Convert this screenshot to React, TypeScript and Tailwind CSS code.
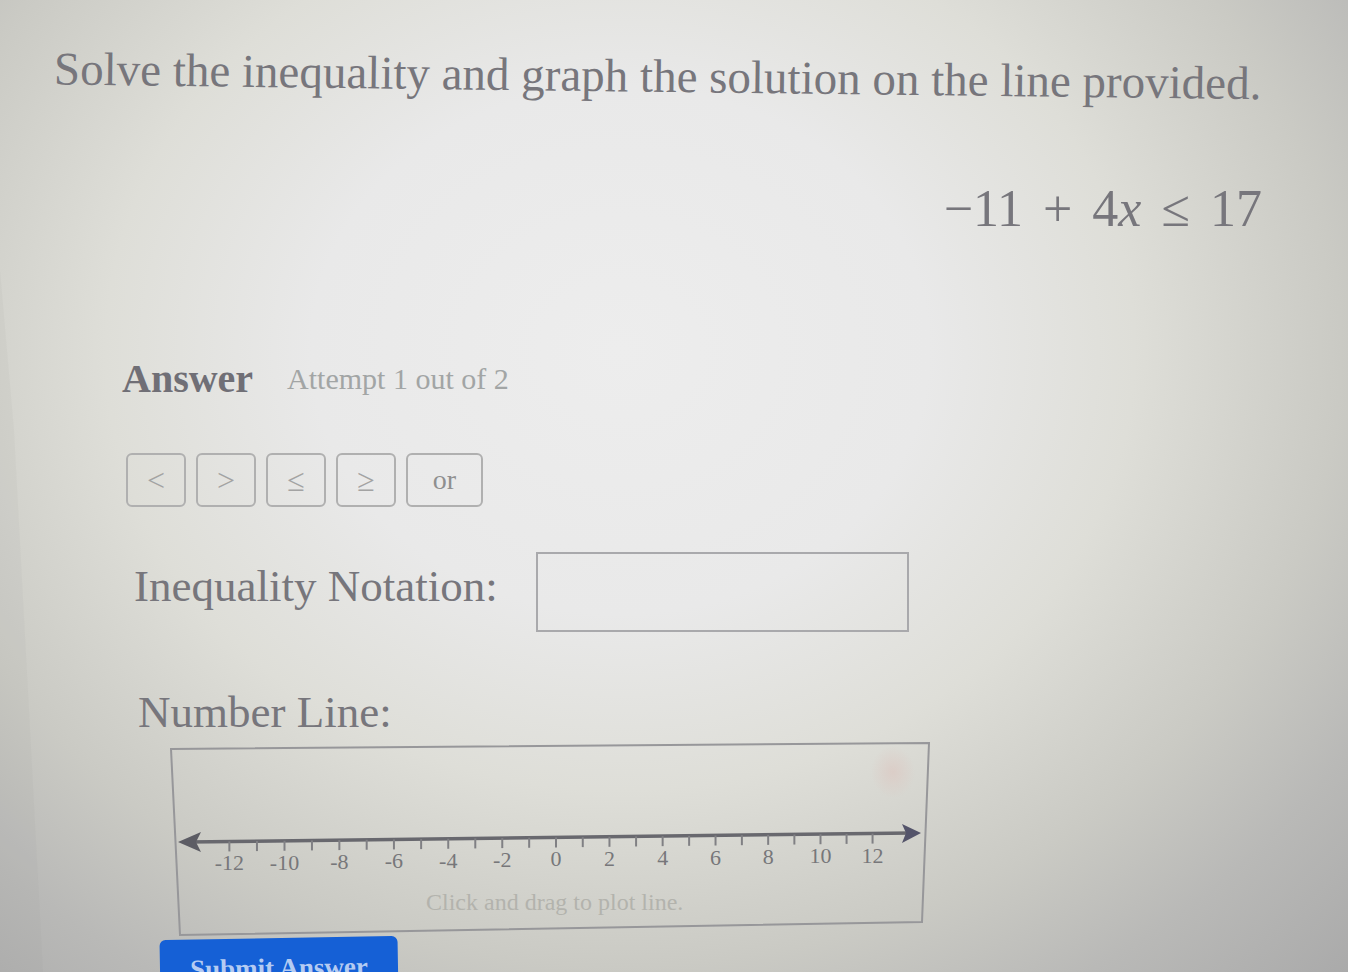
/**
 * Inequality Question
 * ===================
 *
 * Question prompt, inequality input and number line graph
 */

import { useState } from 'react';

const SYMBOLS = ['<', '>', '≤', '≥'];
const TICKS = Array.from({ length: 25 }, (_, i) => i - 12);

const tickX = (n: number) => 386 + 26.8 * n - 0.035 * n * n;
const lineY = (x: number) => 104 - ((x - 12) * 9) / 740;

interface SymbolBarProps {
  onInsert: (symbol: string) => void;
}

function SymbolBar({ onInsert }: SymbolBarProps) {
  return (
    <div className="ml-1 mt-[54px] flex gap-[10px] text-[#a3a3a3]">
      {SYMBOLS.map((symbol) => (
        <button
          key={symbol}
          type="button"
          onClick={() => onInsert(symbol)}
          className="h-[54px] w-[60px] rounded-md border-2 border-[#b0b0b0] text-[32px] leading-none"
        >
          {symbol}
        </button>
      ))}
      <button
        type="button"
        onClick={() => onInsert(' or ')}
        className="h-[54px] w-[77px] rounded-md border-2 border-[#b0b0b0] text-[28px] leading-none text-[#8f8f8f]"
      >
        or
      </button>
    </div>
  );
}

function NumberLine() {
  return (
    <svg viewBox="0 0 764 200" className="block w-full max-w-[764px]" role="group" aria-labelledby="number-line">
      <defs>
        <radialGradient id="clear">
          <stop offset="0" stopColor="#dcc8c2" stopOpacity="0.7" />
          <stop offset="1" stopColor="#dcc8c2" stopOpacity="0" />
        </radialGradient>
      </defs>
      <polygon points="1,11 759,5 752,184 10,197" fill="none" stroke="#97979a" strokeWidth="2" />
      <ellipse cx="723" cy="34" rx="22" ry="26" fill="url(#clear)" />

      {/* Axis with arrow heads */}
      <line x1="18" y1="104" x2="742" y2="95" stroke="#68686e" strokeWidth="3.5" />
      <path d="M8 104 L31 94 L26 104 L31 114 Z" fill="#5c5c64" />
      <path d="M751 95 L732 86 L736 95 L732 105 Z" fill="#54546a" />

      {TICKS.map((n) => {
        const x = tickX(n);
        const y = lineY(x);
        return (
          <g key={n}>
            <line x1={x} y1={y} x2={x} y2={y + 10} stroke="#808084" strokeWidth="2" />
            {n % 2 === 0 && (
              <text x={x} y={y + 29} textAnchor="middle" fontSize="22" fill="#77777a">
                {n}
              </text>
            )}
          </g>
        );
      })}

      <text x="256" y="172" fontSize="24" fill="#b3b3ad">
        Click and drag to plot line.
      </text>
    </svg>
  );
}

export default function App() {
  const [answer, setAnswer] = useState('');

  return (
    <main className="relative min-h-screen overflow-hidden bg-[radial-gradient(ellipse_at_46%_36%,#ededed_0%,#e9e9e9_30%,#deded8_50%,#cacac4_70%,#b9b9b7_84%,#aaaaaa_100%)] px-[54px] pt-12 font-['Liberation_Serif',serif] text-[#77767c] h-screen">
      {/* Edge of the sheet */}
      <svg
        className="pointer-events-none absolute inset-0 h-full w-full"
        viewBox="0 0 1348 972"
        preserveAspectRatio="none"
        aria-hidden="true"
      >
        <path d="M0 270 L14 430 L43 972 L0 972 Z" fill="#909090" fillOpacity="0.06" />
      </svg>

      <h1 className="origin-center rotate-[0.7deg] whitespace-nowrap text-[47px] leading-[56px]">
        Solve the inequality and graph the solution on the line provided.
      </h1>

      <div className="mr-8 mt-[73px] flex justify-end gap-5 text-[52px] leading-[64px]">
        <span>−11</span>
        <span>+</span>
        <span>
          4<i>x</i>
        </span>
        <span>≤</span>
        <span>17</span>
      </div>

      <form className="ml-[68px] mt-[118px]" onSubmit={(e) => e.preventDefault()}>
        <div className="flex items-center gap-[34px]">
          <h2 className="text-[40px] font-bold leading-10 text-[#706f76]">Answer</h2>
          <p className="text-[30px] leading-10 text-[#a2a5a5]">Attempt 1 out of 2</p>
        </div>

        <SymbolBar onInsert={(symbol) => setAnswer(answer + symbol)} />

        <div className="ml-3 mt-[45px] flex gap-[38px]">
          <label htmlFor="notation" className="pt-2 text-[45px] leading-[52px]">
            Inequality Notation:
          </label>
          <input
            id="notation"
            type="text"
            value={answer}
            onChange={(e) => setAnswer(e.target.value)}
            className="h-20 w-[373px] min-w-0 border-2 border-[#a9a9ac] bg-transparent px-4 text-[40px] outline-none"
          />
        </div>

        <h3 id="number-line" className="ml-4 mt-[54px] text-[45px] leading-[52px]">
          Number Line:
        </h3>
        <div className="ml-12">
          <NumberLine />
        </div>

        <button
          type="submit"
          className="ml-[38px] block h-[60px] w-[238px] -rotate-1 rounded-md bg-[#1560d6] text-[27px] font-bold leading-8 text-[#b4cbf2]"
        >
          Submit Answer
        </button>
      </form>
    </main>
  );
}
